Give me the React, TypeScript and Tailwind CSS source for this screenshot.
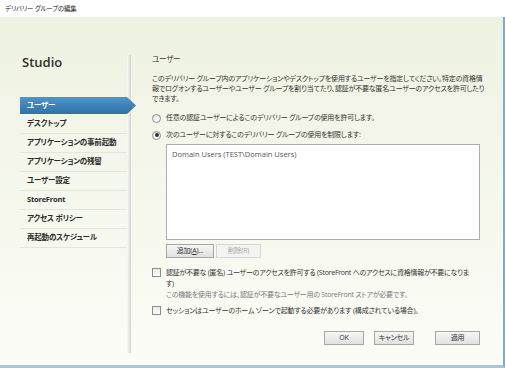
const navItems = [
  'ユーザー',
  'デスクトップ',
  'アプリケーションの事前起動',
  'アプリケーションの残留',
  'ユーザー設定',
  'StoreFront',
  'アクセス ポリシー',
  '再起動のスケジュール',
]

const Radio = ({ checked, label }: { checked?: boolean; label: string }) => (
  <div className="flex items-center h-[12px]">
    <span className="w-[9px] h-[9px] rounded-full border border-[#8c8c8c] bg-linear-to-b from-[#e6e6e6] to-white flex items-center justify-center shrink-0">
      {checked && <span className="w-[4px] h-[4px] rounded-full bg-[#333]" />}
    </span>
    <span className="ml-[5px] whitespace-nowrap">{label}</span>
  </div>
)

const Check = () => (
  <span className="w-[9px] h-[9px] border border-[#8c8c8c] bg-linear-to-b from-[#e8e8e8] to-white shrink-0 mt-[1px]" />
)

const Btn = ({ children, w, disabled }: { children: React.ReactNode; w: string; disabled?: boolean }) => (
  <div
    className={
      disabled
        ? `${w} h-[14px] border border-[#d6d6d6] bg-[#f3f3f1] text-[#a9a9a9] flex items-center justify-center text-[7px]`
        : `${w} h-[14px] border border-[#a7a7a7] bg-linear-to-b from-[#f6f6f6] to-[#e1e1e1] text-[#333] flex items-center justify-center text-[7px]`
    }
  >
    {children}
  </div>
)

export default function App() {
  return (
    <div className="w-[505px] h-[368px] flex flex-col overflow-hidden text-[#333] font-['Open_Sans','Noto_Sans_CJK_JP',sans-serif] [font-feature-settings:'palt']">
      <div className="h-[17px] bg-white pl-[5px] flex items-center text-[6.5px] tracking-[-0.2px] text-[#222] shrink-0">
        デリバリー グループの編集
      </div>
      <div className="flex-1 flex bg-linear-to-b from-[#eef2e1] to-[#fcfdf7] border-r-2 border-r-[#7faacb] border-b-[3px] border-b-[#a9c5d6]">
        {/* sidebar */}
        <div className="w-[127px] shrink-0 pl-[20px] pt-[36px]">
          <div className="pl-[2px] text-[13px] font-semibold text-[#2e2e2e] leading-[18px]">Studio</div>
          <div className="mt-[26px] flex flex-col">
            {navItems.map((item, i) =>
              i === 0 ? (
                <div key={item} className="relative h-[17px] mb-[1px] bg-linear-to-b from-[#4f95c8] to-[#2d72a9] text-white text-[7.5px] font-bold tracking-[-0.2px] pl-[7px] flex items-center">
                  {item}
                  <svg className="absolute -right-[9px] top-0" width="9" height="17" viewBox="0 0 9 17">
                    <defs>
                      <linearGradient id="ag" x1="0" y1="0" x2="0" y2="1">
                        <stop offset="0" stopColor="#4f95c8" />
                        <stop offset="1" stopColor="#2d72a9" />
                      </linearGradient>
                    </defs>
                    <path d="M0 0 L9 8.5 L0 17 Z" fill="url(#ag)" />
                  </svg>
                </div>
              ) : (
                <div key={item} className="h-[19px] border-b border-[#e3e6da] text-[7.5px] font-bold tracking-[-0.2px] text-[#2a2a2a] pl-[7px] flex items-center">
                  {item}
                </div>
              )
            )}
          </div>
        </div>
        {/* divider */}
        <div className="w-[4px] shrink-0 mt-[38px] mb-[12px] bg-linear-to-r from-[#fbfbf8] to-[#d3d4d0]" />
        {/* content */}
        <div className="w-[330px] shrink-0 ml-[21px] pt-[36px] flex flex-col text-[7px] tracking-[-0.2px]">
          <div className="h-[12px] leading-[12px] text-[7.5px]">ユーザー</div>
          <div className="mt-[9px] leading-[10px] whitespace-nowrap">
            このデリバリー グループ内のアプリケーションやデスクトップを使用するユーザーを指定してください。特定の資格情
            <br />
            報でログオンするユーザーやユーザー グループを割り当てたり、認証が不要な匿名ユーザーのアクセスを許可したり
            <br />
            できます。
          </div>
          <div className="mt-[8px]">
            <Radio label="任意の認証ユーザーによるこのデリバリー グループの使用を許可します。" />
          </div>
          <div className="mt-[5px]">
            <Radio checked label="次のユーザーに対するこのデリバリー グループの使用を制限します:" />
          </div>
          <div className="ml-[14px] mt-[3px] w-[314px] h-[96px] border border-[#abadb3] bg-white px-[5px] pt-[4px] text-[#555] text-[7.5px] tracking-normal leading-[10px]">
            Domain Users (TEST\Domain Users)
          </div>
          <div className="ml-[14px] mt-[4px] flex gap-[2px]">
            <Btn w="w-[48px]">
              追加(<span className="underline">A</span>)...
            </Btn>
            <Btn w="w-[45px]" disabled>
              削除(R)
            </Btn>
          </div>
          <div className="mt-[9px] flex leading-[11px] tracking-[-0.25px]">
            <Check />
            <div className="ml-[5px]">
              <div className="whitespace-nowrap">
                認証が不要な (匿名) ユーザーのアクセスを許可する (StoreFront へのアクセスに資格情報が不要になりま
              </div>
              <div>す)</div>
              <div className="text-[#7a7a7a] whitespace-nowrap">
                この機能を使用するには、認証が不要なユーザー用の StoreFront ストアが必要です。
              </div>
            </div>
          </div>
          <div className="mt-[5px] flex leading-[11px]">
            <Check />
            <div className="ml-[5px] whitespace-nowrap">
              セッションはユーザーのホーム ゾーンで起動する必要があります (構成されている場合)。
            </div>
          </div>
          <div className="mt-[15px] flex justify-end pr-[2px]">
            <Btn w="w-[40px]">OK</Btn>
            <div className="w-[10px]" />
            <Btn w="w-[40px]">キャンセル</Btn>
            <div className="w-[21px]" />
            <Btn w="w-[45px]">適用</Btn>
          </div>
        </div>
      </div>
    </div>
  )
}
